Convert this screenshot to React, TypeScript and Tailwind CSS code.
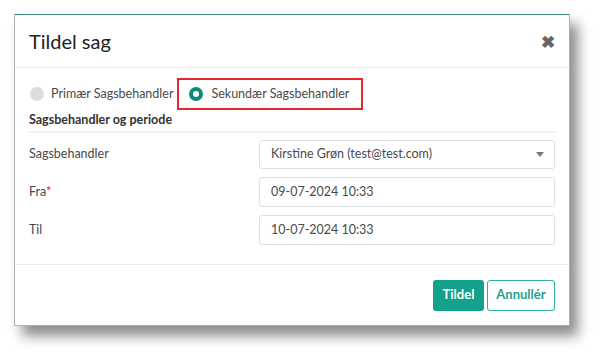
export default function App() {
  return (
    <main
      className="h-[362px] w-[606px] overflow-hidden bg-white text-[#333]"
      style={{ fontFamily: "Lato, 'Open Sans', sans-serif" }}
    >
      <div className="ml-[14px] mt-[14px] flex h-[312px] w-[556px] flex-col border border-[#a9b3b1] border-t-[#3c8f80] bg-white shadow-[8px_10px_12px_rgba(0,0,0,0.45)]">
        <header className="flex h-[53px] shrink-0 items-center justify-between border-b border-[#ececec] pl-[14px] pr-[14px]">
          <h1 className="text-[20px] leading-none text-[#222]">Tildel sag</h1>
          <span className="text-[17px] font-bold leading-none text-[#666]">✖</span>
        </header>

        <div className="flex flex-1 flex-col px-[14px]">
          <div className="mt-[10px] flex h-[32px] items-center">
            <label className="flex items-center gap-[7px] pl-[1px] text-[12.5px] text-[#4a4a4a]">
              <span className="h-[14px] w-[14px] rounded-full bg-[#dcdcdc]" />
              Primær Sagsbehandler
            </label>
            <label className="ml-[4px] flex h-[32px] w-[186px] items-center gap-[8px] border-2 border-[#e5262c] pl-[10px] text-[12.5px] text-[#4a4a4a]">
              <span className="h-[14px] w-[14px] rounded-full border-[4px] border-[#0f8a78] bg-white" />
              Sekundær Sagsbehandler
            </label>
          </div>

          <h2 className="mt-[1px] border-b-2 border-[#eef0f1] pb-[2px] text-[12.5px] font-bold leading-[18px] text-[#333]">
            Sagsbehandler og periode
          </h2>

          <div className="mt-[7px] flex flex-col gap-[8px]">
            <div className="flex items-center">
              <span className="w-[230px] text-[12.5px] text-[#4a4a4a]">Sagsbehandler</span>
              <div className="flex h-[29px] flex-1 items-center justify-between rounded-[3px] border border-[#dde1e4] pl-[11px] pr-[10px] text-[12.5px] text-[#4a4a4a]">
                Kirstine Grøn (test@test.com)
                <span className="h-0 w-0 border-x-[4px] border-t-[5px] border-x-transparent border-t-[#777]" />
              </div>
            </div>
            <div className="flex items-center">
              <span className="w-[230px] text-[12.5px] text-[#4a4a4a]">
                Fra<span className="text-[#e5262c]">*</span>
              </span>
              <div className="flex h-[30px] flex-1 items-center rounded-[3px] border border-[#dde1e4] pl-[11px] text-[12.5px] text-[#4a4a4a]">
                09-07-2024 10:33
              </div>
            </div>
            <div className="flex items-center">
              <span className="w-[230px] text-[12.5px] text-[#4a4a4a]">Til</span>
              <div className="flex h-[30px] flex-1 items-center rounded-[3px] border border-[#dde1e4] pl-[11px] text-[12.5px] text-[#4a4a4a]">
                10-07-2024 10:33
              </div>
            </div>
          </div>
        </div>

        <footer className="flex h-[61px] shrink-0 items-center justify-end gap-[3px] border-t border-[#ececec] pr-[14px]">
          <button className="h-[31px] w-[51px] rounded-[3px] bg-[#12a18b] text-[13px] font-bold text-white">
            Tildel
          </button>
          <button className="h-[31px] w-[68px] rounded-[3px] border border-[#2fab98] bg-white text-[13px] font-bold text-[#2a9e8c]">
            Annullér
          </button>
        </footer>
      </div>
    </main>
  );
}
